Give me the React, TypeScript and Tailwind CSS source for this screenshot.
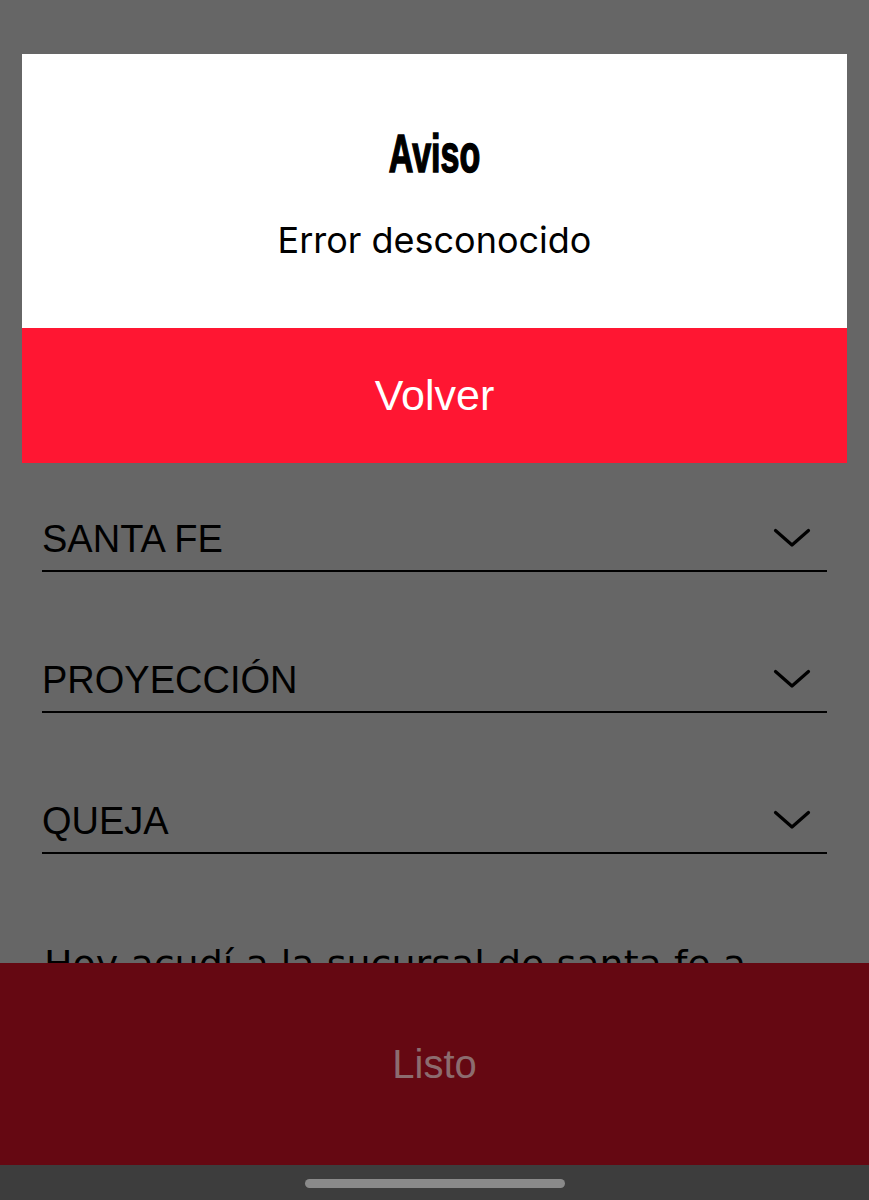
import React from 'react';

const fields = ['SANTA FE', 'PROYECCIÓN', 'QUEJA'];

const Chevron: React.FC = () => (
  <svg width="38" height="20" viewBox="0 0 38 20" fill="none" className="mr-[16px]">
    <polyline points="2.5,2.5 19,17 35.5,2.5" stroke="#000" strokeWidth="3.2" strokeLinecap="round" strokeLinejoin="round" />
  </svg>
);

const App: React.FC = () => {
  return (
    <div className="w-[869px] h-[1200px] overflow-hidden flex flex-col bg-[#666666] font-['Liberation_Sans',Arial,sans-serif]">
      {/* dialog */}
      <div className="mt-[54px] mx-[22px] flex flex-col">
        <div className="bg-white h-[274px] flex flex-col items-center">
          <div className="mt-[72px] h-[54px] leading-[54px] text-[54px] font-bold text-black font-['Liberation_Sans_Narrow','Liberation_Sans',sans-serif] scale-x-[0.63] [-webkit-text-stroke:1.6px_black]">
            Aviso
          </div>
          <div className="mt-[42px] h-[36px] leading-[36px] text-[36px] text-black font-['Inter',sans-serif]">
            Error desconocido
          </div>
        </div>
        <div className="bg-[#ff1632] h-[135px] flex items-center justify-center">
          <span className="text-white text-[43px] leading-[43px]">Volver</span>
        </div>
      </div>

      {/* form behind the overlay */}
      <div className="mt-[57px] px-[42px] flex flex-col gap-[89px]">
        {fields.map((f) => (
          <div key={f} className="flex items-end justify-between border-b-2 border-black pb-3 relative">
            <span className="text-black text-[38px] leading-[38px]">{f}</span>
            <div className="absolute right-0 top-[8px]">
              <Chevron />
            </div>
          </div>
        ))}
      </div>

      <div className="h-[109px] overflow-hidden px-[44px] pt-[91px] shrink-0">
        <div className="text-black text-[38px] leading-[38px] whitespace-nowrap font-['DejaVu_Sans',sans-serif]">
          Hoy acudí a la sucursal de santa fe a
        </div>
      </div>

      {/* bottom button */}
      <div className="h-[202px] bg-[#650812] flex items-center justify-center shrink-0">
        <span className="text-[#8c6c6f] text-[40px] leading-[40px]">Listo</span>
      </div>

      {/* system nav */}
      <div className="h-[35px] bg-[#3d3d3d] flex items-start justify-center shrink-0">
        <div className="mt-[14px] w-[260px] h-[9px] rounded-full bg-[#8a8a8a]" />
      </div>
    </div>
  );
};

export default App;
